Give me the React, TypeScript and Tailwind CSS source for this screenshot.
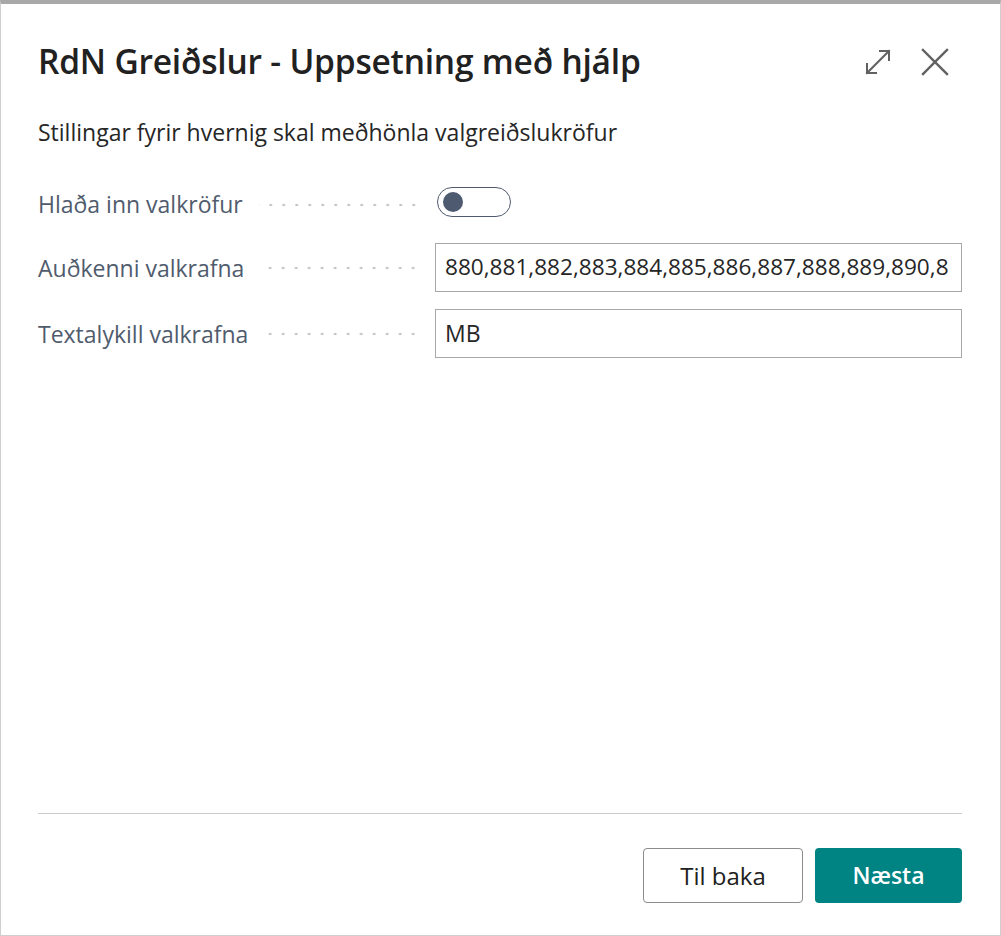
import React from "react";

function Row({ label, children, labelOffset = "" }: { label: string; children: React.ReactNode; labelOffset?: string }) {
  return (
    <div className="flex items-center h-[48px]">
      <div className={"w-[397px] shrink-0 flex items-center pr-[15px] " + labelOffset}>
        <span className="text-[23px] text-[#505c6d] whitespace-nowrap leading-none">{label}</span>
        <div className="flex-1 ml-[16px] h-[4px] bg-[radial-gradient(circle,#bfc3c9_1px,transparent_1.6px)] bg-[length:13px_4px] bg-repeat-x bg-[position:right_center]" />
      </div>
      <div className="flex-1 min-w-0">{children}</div>
    </div>
  );
}

export default function App() {
  return (
    <div
      className="w-[1001px] h-[936px] bg-white border-t-4 border-t-[#a8a8a8] border-x border-b border-x-[#cfcfcf] border-b-[#cfcfcf] flex flex-col"
      style={{ fontFamily: '"Open Sans", "Noto Sans", sans-serif' }}
    >
      <div className="pl-[37px] pr-[38px] flex-1 flex flex-col">
        <div className="flex items-center justify-between pt-[36px] h-[80px]">
          <h1 className="text-[33.5px] font-semibold text-[#212121] leading-none tracking-[-0.2px]">
            RdN Greiðslur - Uppsetning með hjálp
          </h1>
          <div className="flex items-center gap-[30px] mr-[13px]">
            <svg width="26" height="26" viewBox="0 0 26 26" fill="none" stroke="#616161" strokeWidth="2" strokeLinecap="square">
              <path d="M2 24 L24 2" />
              <path d="M15 2 H24 V11" />
              <path d="M2 15 V24 H11" />
            </svg>
            <svg width="28" height="28" viewBox="0 0 28 28" fill="none" stroke="#616161" strokeWidth="2.4" strokeLinecap="square">
              <path d="M2 2 L26 26" />
              <path d="M26 2 L2 26" />
            </svg>
          </div>
        </div>
        <p className="mt-[37px] text-[23px] text-[#262626] leading-none">
          Stillingar fyrir hvernig skal meðhönla valgreiðslukröfur
        </p>
        <div className="mt-[33px] flex flex-col gap-[18px]">
          <Row label="Hlaða inn valkröfur" labelOffset="mt-[7px]">
            <div className="ml-[2px] w-[74px] h-[30px] rounded-full border border-[#4f5a6c] flex items-center px-[5px] mt-[2px]">
              <div className="w-[20px] h-[20px] rounded-full bg-[#4e5a70]" />
            </div>
          </Row>
          <Row label="Auðkenni valkrafna" labelOffset="mt-[2px]">
            <div className="h-[49px] border border-[#a8a8a8] flex items-center px-[9px] overflow-hidden">
              <span className="text-[22.6px] text-[#262626] whitespace-nowrap">
                880,881,882,883,884,885,886,887,888,889,890,8
              </span>
            </div>
          </Row>
          <Row label="Textalykill valkrafna" labelOffset="mt-[2px]">
            <div className="h-[49px] border border-[#a8a8a8] flex items-center px-[9px]">
              <span className="text-[23px] text-[#262626]">MB</span>
            </div>
          </Row>
        </div>
        <div className="flex-1" />
        <div className="border-t border-[#cccccc]" />
        <div className="flex justify-end gap-[12px] pt-[34px] pb-[32px]">
          <button className="w-[160px] h-[55px] rounded-[4px] border border-[#8c8c8c] text-[24px] text-[#212121] bg-white">
            Til baka
          </button>
          <button className="w-[147px] h-[55px] rounded-[4px] bg-[#008383] text-[23px] font-semibold text-white">
            Næsta
          </button>
        </div>
      </div>
    </div>
  );
}
